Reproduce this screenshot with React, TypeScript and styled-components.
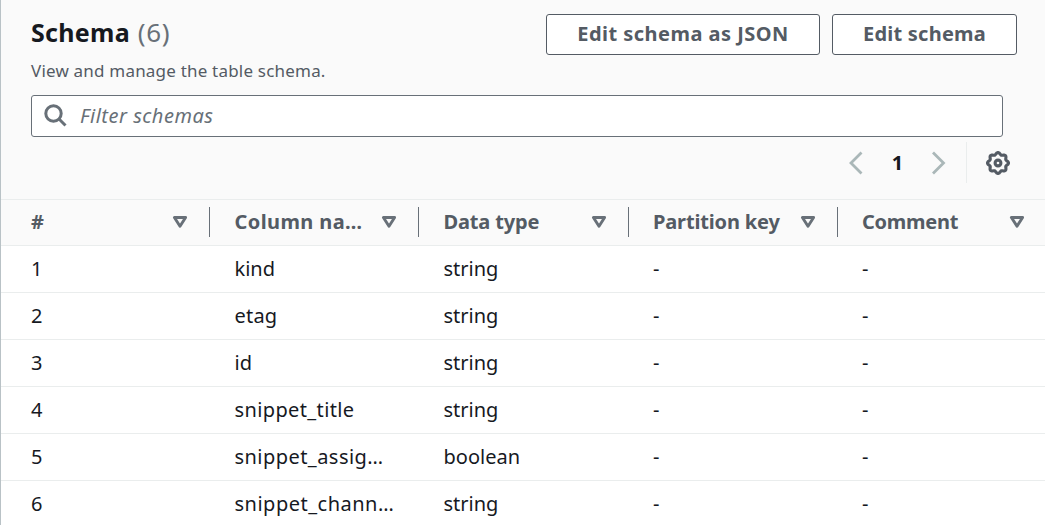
import React from "react";
import styled, { createGlobalStyle } from "styled-components";

const GlobalStyle = createGlobalStyle`
  *, *::before, *::after { box-sizing: border-box; }
  html, body { margin: 0; padding: 0; height: 100%; overflow: hidden; background: #fff; }
  body { font-family: "Noto Sans", "Open Sans", sans-serif; color: #16191f; }
`;

const Panel = styled.section`
  width: 1045px;
  height: 525px;
  overflow: hidden;
  border-left: 1px solid #b9c2c6;
  background: #fff;
`;

const Header = styled.header`
  height: 199px;
  background: #fafafa;
  padding: 14px 28px 0 30px;
`;

const TitleRow = styled.div`
  display: flex;
  justify-content: space-between;
  align-items: flex-start;
  height: 46px;
`;

const Title = styled.h2`
  margin: 0;
  font-size: 25px;
  line-height: 36px;
  font-weight: 700;
  letter-spacing: 0.3px;
  white-space: nowrap;
`;

const Counter = styled.span`
  font-size: 26px;
  font-weight: 400;
  letter-spacing: 0.6px;
  margin-left: 1px;
  color: #687078;
`;

const Actions = styled.div`
  display: flex;
  gap: 12px;
`;

const Button = styled.button<{ $width: number; $tracking: number }>`
  width: ${(p) => p.$width}px;
  height: 41px;
  padding: 0 0 2px;
  border: 1px solid #545b64;
  border-radius: 3px;
  background: #fff;
  color: #545b64;
  font: 700 20px/28px "Noto Sans", sans-serif;
  letter-spacing: ${(p) => p.$tracking}px;
  white-space: nowrap;
`;

const Description = styled.p`
  margin: 0;
  height: 35px;
  font-size: 17px;
  line-height: 22px;
  letter-spacing: 0.2px;
  color: #545b64;
`;

const SearchBox = styled.label`
  display: flex;
  align-items: center;
  width: 972px;
  height: 42px;
  padding-left: 12px;
  gap: 12px;
  border: 1px solid #687078;
  border-radius: 3px;
  background: #fff;
`;

const SearchInput = styled.input`
  flex: 1;
  height: 38px;
  padding: 0 0 2px;
  border: 0;
  outline: 0;
  background: transparent;
  font: 400 20px/28px "Noto Sans", sans-serif;
  letter-spacing: 0.5px;
  &::placeholder { color: #687078; font-style: italic; opacity: 1; }
`;

const Tools = styled.div`
  display: flex;
  justify-content: flex-end;
  align-items: center;
  height: 41px;
  margin-top: 5px;
  padding-right: 7px;
`;

const PageNumber = styled.span`
  width: 69px;
  text-align: center;
  font-size: 20px;
  line-height: 28px;
  font-weight: 700;
`;

const Divider = styled.span`
  width: 1px;
  height: 41px;
  margin: 0 19px 0 20px;
  background: #eaeded;
`;

const Row = styled.div<{ $head?: boolean }>`
  display: grid;
  grid-template-columns: 208px 209px 210px 209px 208px;
  align-items: center;
  height: ${(p) => (p.$head ? 46 : 47)}px;
  border-top: 1px solid #eaeded;
  background: ${(p) => (p.$head ? "#fafafa" : "#fff")};
`;

const HeadCell = styled.div`
  display: flex;
  align-items: center;
  justify-content: space-between;
  height: 30px;
  min-width: 0;
  margin-bottom: 1px;
  padding: 0 21px 0 24px;
  border-left: 1px solid #687078;
  font-size: 20px;
  line-height: 28px;
  font-weight: 700;
  color: #545b64;
  white-space: nowrap;

  &:first-child {
    padding-left: 30px;
    border-left: 0;
  }

  &:nth-child(2),
  &:nth-child(3) {
    padding-left: 24.5px;
  }

  &:last-child {
    padding-right: 20px;
  }
`;

const Text = styled.span<{ $tracking?: number }>`
  letter-spacing: ${(p) => p.$tracking ?? 0}px;
`;

const Cell = styled.div`
  padding-left: 25px;
  font-size: 20px;
  line-height: 28px;
  white-space: nowrap;

  &:first-child {
    padding-left: 30px;
  }

  &:nth-child(2),
  &:nth-child(3) {
    padding-left: 25.5px;
  }
`;

const SearchIcon = () => (
  <svg width="24" height="24" viewBox="0 0 24 24" fill="none" stroke="#687078" strokeWidth="3">
    <circle cx="9.5" cy="9.5" r="7.7" />
    <path d="M14.8 14.8 21.5 21.5" />
  </svg>
);

const Chevron = ({ right }: { right?: boolean }) => (
  <svg width="14" height="24" viewBox="0 0 14 24" fill="none" stroke="#aab7b8" strokeWidth="2.8">
    <path d={right ? "M1 1.5 11.5 12 1 22.5" : "M12.5 1.5 2 12l10.5 10.5"} />
  </svg>
);

// Eight rounded teeth around a ring.
const gearOutline =
  Array.from({ length: 96 }, (_, i) => {
    const a = (i / 96) * Math.PI * 2;
    const r = 9.5 + 1 * Math.cos(8 * a);
    return `${i ? "L" : "M"}${(12 + r * Math.cos(a)).toFixed(2)} ${(12 + r * Math.sin(a)).toFixed(2)}`;
  }).join("") + "Z";

const GearIcon = () => (
  <svg width="24" height="24" viewBox="0 0 24 24" fill="none" stroke="#545b64" strokeWidth="3.1" strokeLinejoin="round">
    <path d={gearOutline} />
    <circle cx="12" cy="12" r="2.9" />
  </svg>
);

const SortIcon = () => (
  <svg width="16" height="14" viewBox="0 0 16 14" fill="none" stroke="#687078" strokeWidth="2.9" strokeLinejoin="round">
    <path d="M2.4 2.5h11.2L8 11.2Z" />
  </svg>
);

type Value = { text: string; tracking?: number };

const columns: Value[] = [
  { text: "#" },
  { text: "Column na…", tracking: 0.4 },
  { text: "Data type", tracking: -0.15 },
  { text: "Partition key", tracking: -0.15 },
  { text: "Comment", tracking: -0.25 },
];

const fields: { name: Value; type: string }[] = [
  { name: { text: "kind" }, type: "string" },
  { name: { text: "etag", tracking: 0.2 }, type: "string" },
  { name: { text: "id" }, type: "string" },
  { name: { text: "snippet_title", tracking: 0.37 }, type: "string" },
  { name: { text: "snippet_assig…", tracking: 0.45 }, type: "boolean" },
  { name: { text: "snippet_chann…", tracking: 0.5 }, type: "string" },
];

export default function App() {
  return (
    <Panel>
      <GlobalStyle />
      <Header>
        <TitleRow>
          <Title>
            Schema <Counter>(6)</Counter>
          </Title>
          <Actions>
            <Button $width={274} $tracking={0.47}>Edit schema as JSON</Button>
            <Button $width={185} $tracking={0.23}>Edit schema</Button>
          </Actions>
        </TitleRow>
        <Description>View and manage the table schema.</Description>
        <SearchBox>
          <SearchIcon />
          <SearchInput placeholder="Filter schemas" />
        </SearchBox>
        <Tools>
          <Chevron />
          <PageNumber>1</PageNumber>
          <Chevron right />
          <Divider />
          <GearIcon />
        </Tools>
      </Header>
      <Row $head>
        {columns.map((c) => (
          <HeadCell key={c.text}>
            <Text $tracking={c.tracking}>{c.text}</Text>
            <SortIcon />
          </HeadCell>
        ))}
      </Row>
      {fields.map((f, i) => (
        <Row key={f.name.text}>
          <Cell>{i + 1}</Cell>
          <Cell>
            <Text $tracking={f.name.tracking}>{f.name.text}</Text>
          </Cell>
          <Cell>{f.type}</Cell>
          <Cell>-</Cell>
          <Cell>-</Cell>
        </Row>
      ))}
    </Panel>
  );
}
